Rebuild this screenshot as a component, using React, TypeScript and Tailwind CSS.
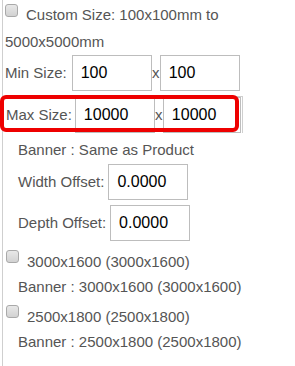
const font = { fontFamily: '"Liberation Sans", Arial, sans-serif' };

function Box() {
  return (
    <span className="block w-[13px] h-[13px] rounded-[3px] border border-[#a9a9a9] bg-gradient-to-b from-[#e8e8e8] to-[#d2d2d2] shrink-0" />
  );
}

function Field({ value, className = "" }: { value: string; className?: string }) {
  return (
    <div
      className={`w-[80px] h-[36px] border border-[#bdbdbd] bg-white pl-[8px] flex items-center text-[16px] text-black shrink-0 ${className}`}
    >
      {value}
    </div>
  );
}

export default function App() {
  return (
    <div
      className="relative w-[295px] h-[366px] bg-white overflow-hidden text-[15px] text-[#555] whitespace-nowrap"
      style={font}
    >
      <div className="ml-[2px] h-full border-l border-[#cfcfcf] pt-[2px]">
        {/* custom size option */}
        <div className="flex h-[26px] pl-[2px]">
          <div className="mt-[2px]">
            <Box />
          </div>
          <span className="ml-[8px] leading-[26px]">Custom Size: 100x100mm to</span>
        </div>
        <div className="h-[27px] leading-[27px] pl-[2px]">5000x5000mm</div>

        {/* min size */}
        <div className="flex items-center h-[36px] pl-[2px]">
          <span className="shrink-0">Min Size:</span>
          <Field value="100" className="ml-[5px]" />
          <span className="w-[8px] text-center shrink-0">x</span>
          <Field value="100" />
        </div>

        {/* max size */}
        <div className="mt-[5px] flex items-end h-[37px] w-[240px] border-t border-r border-[#cfcfcf] pl-[3px]">
          <span className="self-center shrink-0">Max Size:</span>
          <Field value="10000" className="ml-[3px]" />
          <span className="self-center w-[8px] text-center shrink-0">x</span>
          <Field value="10000" className="!w-[78px]" />
        </div>

        <div className="mt-[4px] h-[26px] leading-[26px] pl-[15px]">Banner : Same as Product</div>

        <div className="mt-[1px] flex items-center h-[36px] pl-[15px]">
          <span className="shrink-0">Width Offset:</span>
          <Field value="0.0000" className="ml-[4px]" />
        </div>
        <div className="mt-[5px] flex items-center h-[36px] pl-[15px]">
          <span className="shrink-0">Depth Offset:</span>
          <Field value="0.0000" className="ml-[4px]" />
        </div>

        {/* preset sizes */}
        <div className="mt-[8px] flex h-[25px] pl-[3px]">
          <div className="mt-[1px]">
            <Box />
          </div>
          <span className="ml-[8px] leading-[25px]">3000x1600 (3000x1600)</span>
        </div>
        <div className="h-[25px] leading-[25px] pl-[15px]">Banner : 3000x1600 (3000x1600)</div>

        <div className="mt-[5px] flex h-[25px] pl-[3px]">
          <div className="mt-[1px]">
            <Box />
          </div>
          <span className="ml-[8px] leading-[25px]">2500x1800 (2500x1800)</span>
        </div>
        <div className="h-[25px] leading-[25px] pl-[15px]">Banner : 2500x1800 (2500x1800)</div>
      </div>

      {/* red highlight annotation */}
      <div className="absolute left-0 top-[95px] w-[239px] h-[37px] border-4 border-[#ee0000] rounded-[6px] pointer-events-none" />
    </div>
  );
}
